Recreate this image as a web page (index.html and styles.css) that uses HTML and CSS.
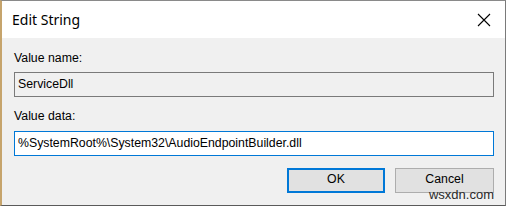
FILE: index.html
```html
<!DOCTYPE html>
<html>
<head lang="en">
    <meta charset="UTF-8">
    <title>Edit String</title>
    <link rel="stylesheet" href="styles.css">
</head>
<body>
<div class="dialog">
    <div class="titlebar">
        <span class="title">Edit String</span>
        <span class="close">
            <svg width="14" height="14" viewBox="0 0 14 14"><path d="M1 1L13 13M13 1L1 13" stroke="#000" stroke-width="1.1" fill="none"/></svg>
        </span>
    </div>
    <div class="content">
        <div class="label">Value name:</div>
        <div class="field field-off">ServiceDll</div>
        <div class="label label2">Value data:</div>
        <div class="field field-on">%SystemRoot%\System32\AudioEndpointBuilder.dll</div>
        <div class="buttons">
            <div class="btn btn-def">OK</div>
            <div class="btn">Cancel</div>
        </div>
    </div>
    <div class="mark">wsxdn.com</div>
</div>
</body>
</html>
```

FILE: styles.css
```css
*{
    margin: 0;
    padding: 0;
    box-sizing: border-box;
}
body{
    width: 507px;
    height: 207px;
    background: #fff;
    overflow: hidden;
}
.dialog{
    position: relative;
    width: 506px;
    height: 206px;
    border-top: 1px solid #8a8a8a;
    border-left: 2px solid #c6a46c;
    border-right: 1px solid #7a7a7a;
    border-bottom: 1px solid #5a5a5a;
    background: #f0f0f0;
    font-family: "Liberation Sans", Arial, sans-serif;
    font-size: 12.3px;
    color: #000;
}
.titlebar{
    height: 37px;
    background: #fff;
    display: flex;
    align-items: center;
    justify-content: space-between;
    padding: 0 14px 0 10px;
}
.title{
    font-family: "Noto Sans", sans-serif;
    font-size: 14px;
    color: #000;
}
.close{
    display: flex;
    width: 14px;
    height: 14px;
}
.content{
    padding: 12px 11px 0 12px;
}
.label{
    height: 16px;
    line-height: 16px;
}
.label2{
    margin-top: 11px;
}
.field{
    margin-top: 6px;
    height: 25px;
    line-height: 23px;
    padding-left: 3px;
    border: 1px solid #7a7a7a;
    white-space: nowrap;
}
.field-off{
    background: #f0f0f0;
    color: #000;
}
.field-on{
    margin-top: 7px;
    background: #fff;
    border-color: #0078d7;
}
.buttons{
    display: flex;
    justify-content: flex-end;
    gap: 10px;
    margin-top: 12px;
}
.btn{
    width: 99px;
    height: 25px;
    line-height: 21px;
    text-align: center;
    background: #e1e1e1;
    border: 1px solid #adadad;
}
.btn-def{
    width: 98px;
    border: 2px solid #0078d7;
    line-height: 19px;
}
.mark{
    position: absolute;
    right: 10px;
    bottom: 4px;
    font-size: 13px;
    line-height: 13px;
    color: #2a2a2a;
    padding: 0 1px;
}
```
